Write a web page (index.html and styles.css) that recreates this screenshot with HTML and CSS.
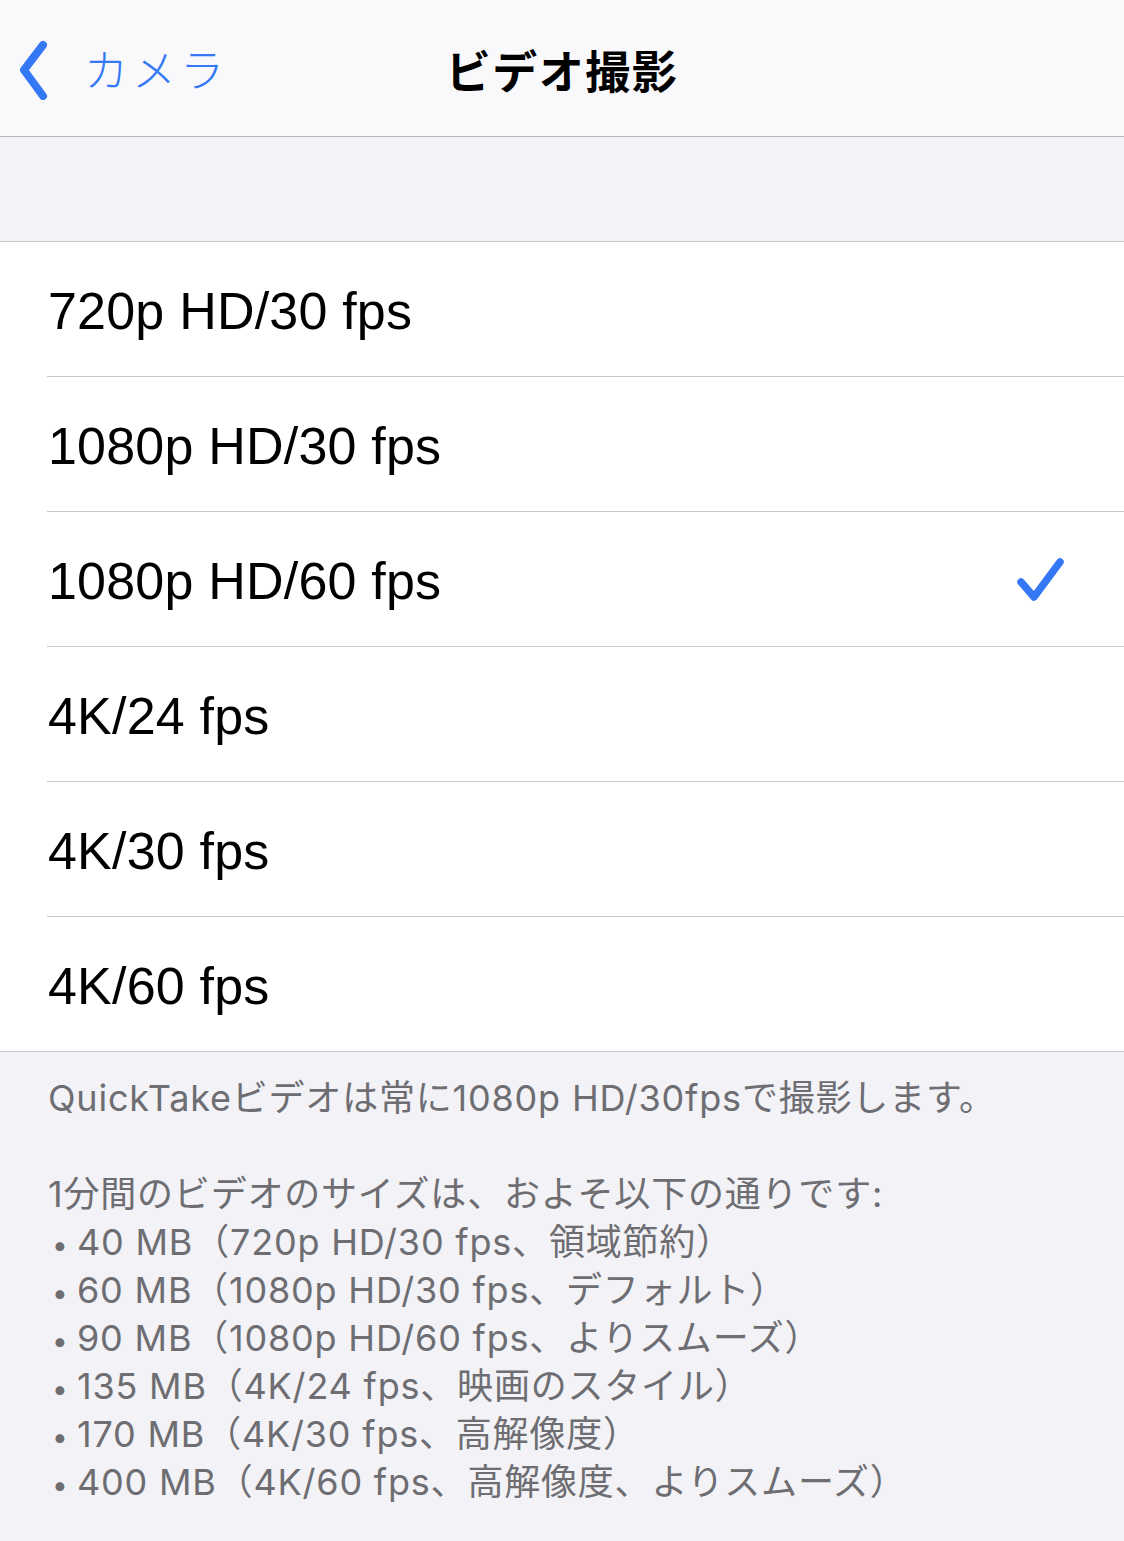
FILE: index.html
```html
<!DOCTYPE html>
<html lang="ja">
<head>
  <meta charset="UTF-8" />
  <meta name="viewport" content="width=device-width, initial-scale=1.0" />
  <title>ビデオ撮影</title>
  <link rel="stylesheet" href="styles.css">
</head>
<body>
  <header class="navbar">
    <a class="back" href="#">
      <svg class="chevron" width="30" height="60" viewBox="0 0 30 60">
        <polyline points="23,5 4,30 23,56" fill="none" stroke="#3478f6" stroke-width="8" stroke-linecap="round" stroke-linejoin="round"/>
      </svg>
      <span>カメラ</span>
    </a>
    <h1 class="title">ビデオ撮影</h1>
  </header>

  <div class="spacer"></div>

  <ul class="group">
    <li class="row"><div class="row-inner"><span>720p HD/30 fps</span></div></li>
    <li class="row"><div class="row-inner"><span>1080p HD/30 fps</span></div></li>
    <li class="row"><div class="row-inner">
      <span>1080p HD/60 fps</span>
      <svg class="check" width="50" height="50" viewBox="0 0 50 50">
        <polyline points="5,28 18,43 44,8" fill="none" stroke="#3478f6" stroke-width="7.5" stroke-linecap="round" stroke-linejoin="round"/>
      </svg>
    </div></li>
    <li class="row"><div class="row-inner"><span>4K/24 fps</span></div></li>
    <li class="row"><div class="row-inner"><span>4K/30 fps</span></div></li>
    <li class="row"><div class="row-inner"><span>4K/60 fps</span></div></li>
  </ul>

  <div class="footer">
    <p>QuickTakeビデオは常に1080p HD/30fpsで撮影します。</p>
    <p>1分間のビデオのサイズは、およそ以下の通りです:</p>
    <ul class="sizes">
      <li>40 MB（720p HD/30 fps、領域節約）</li>
      <li>60 MB（1080p HD/30 fps、デフォルト）</li>
      <li>90 MB（1080p HD/60 fps、よりスムーズ）</li>
      <li>135 MB（4K/24 fps、映画のスタイル）</li>
      <li>170 MB（4K/30 fps、高解像度）</li>
      <li>400 MB（4K/60 fps、高解像度、よりスムーズ）</li>
    </ul>
  </div>
</body>
</html>
```

FILE: styles.css
```css
body {
  margin: 0;
  background: #f2f2f7;
  font-family: "Liberation Sans", "Noto Sans CJK JP", sans-serif;
  color: #000;
}
.navbar {
  height: 136px;
  background: #f9f9fb;
  border-bottom: 1px solid #b5b5b8;
  display: flex;
  align-items: center;
  justify-content: center;
  position: relative;
}
.back {
  position: absolute;
  left: 20px;
  top: 40px;
  display: flex;
  align-items: center;
  gap: 34px;
  text-decoration: none;
  color: #3478f6;
  font-family: "Noto Sans CJK JP", sans-serif;
  font-weight: 300;
  font-size: 44px;
  letter-spacing: 4px;
}
.back span {
  margin-top: -4px;
}
.chevron {
  display: block;
}
.title {
  margin: 0;
  font-family: "Noto Sans CJK JP", sans-serif;
  font-weight: 700;
  font-size: 45px;
  letter-spacing: 1.5px;
  padding-top: 2px;
}
.spacer {
  height: 104px;
  border-bottom: 1px solid #c8c7cc;
}
.group {
  list-style: none;
  margin: 0;
  padding: 0;
  background: #fff;
  border-bottom: 1px solid #c8c7cc;
}
.row {
  padding-left: 47px;
}
.row-inner {
  height: 130px;
  padding-top: 4px;
  display: flex;
  align-items: center;
  justify-content: space-between;
  padding-right: 58px;
  padding-left: 1px;
  border-bottom: 1px solid #c8c7cc;
  font-size: 52px;
  letter-spacing: 0.2px;
}
.row:last-child .row-inner {
  border-bottom: none;
}
.check {
  display: block;
  margin-top: -4px;
}
.footer {
  padding: 22px 40px 0 48px;
  color: #6d6d72;
  font-family: "Inter", "Noto Sans CJK JP", sans-serif;
  font-size: 36px;
  line-height: 48px;
  letter-spacing: 0.8px;
}
.footer p {
  margin: 0;
}
.footer p:first-child {
  margin-bottom: 48px;
}
.sizes {
  list-style: none;
  margin: 0;
  padding: 0;
}
.sizes li {
  height: 48px;
  white-space: nowrap;
}
.sizes li::before {
  content: "•";
  display: inline-block;
  width: 29px;
  padding-left: 4px;
  box-sizing: border-box;
  font-size: 28px;
  line-height: 1;
}
```
